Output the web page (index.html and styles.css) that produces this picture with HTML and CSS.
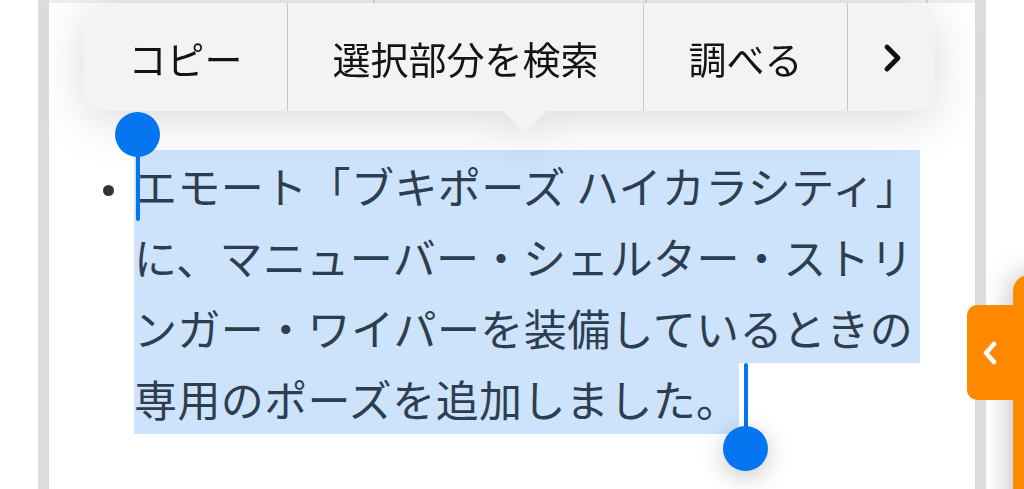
FILE: index.html
```html
<!DOCTYPE html>
<html lang="ja">
<head>
    <meta charset="UTF-8">
    <meta name="viewport" content="width=device-width, initial-scale=1.0">
    <title>アップデート内容</title>
    <link rel="stylesheet" href="styles.css">
</head>
<body>
    <div class="page">
        <div class="card">
            <div class="prev-row">
                <div class="prev-cell prev-first"><span>■ ギア</span></div>
                <div class="prev-cell prev-second"><span>ブキ</span></div>
                <div class="prev-cell"><span>ステージ</span></div>
            </div>

            <div class="notes">
                <div class="item">
                    <span class="dot"></span>
                    <div class="text">
                        <div class="line">エモート「ブキポーズ ハイカラシティ」</div>
                        <div class="line">に、マニューバー・シェルター・ストリ</div>
                        <div class="line">ンガー・ワイパーを装備しているときの</div>
                        <div class="line last">専用のポーズを追加しました。</div>
                    </div>
                </div>
            </div>
        </div>

        <!-- iOS edit menu over the selection -->
        <div class="edit-menu">
            <div class="menu-arrow"></div>
            <div class="menu-item copy">コピー</div>
            <div class="menu-item search">選択部分を検索</div>
            <div class="menu-item lookup">調べる</div>
            <div class="menu-item more">
                <svg width="22" height="30" viewBox="0 0 22 30">
                    <polyline points="6,4 17,15 6,26" fill="none" stroke="#111" stroke-width="4.8" stroke-linecap="round" stroke-linejoin="round"/>
                </svg>
            </div>
        </div>

        <!-- selection handles -->
        <div class="handle handle-start">
            <span class="knob"></span>
            <span class="stem"></span>
        </div>
        <div class="handle handle-end">
            <span class="stem"></span>
            <span class="knob"></span>
        </div>

        <!-- side drawer -->
        <div class="drawer"></div>
        <div class="drawer-tab">
            <svg width="16" height="24" viewBox="0 0 16 24">
                <polyline points="12,3 4,12 12,21" fill="none" stroke="#fff" stroke-width="4.5" stroke-linecap="round" stroke-linejoin="round"/>
            </svg>
        </div>
    </div>
</body>
</html>
```

FILE: styles.css
```css
body {
    margin: 0;
    padding: 0;
    background-color: #fff;
    font-family: "Noto Sans CJK JP", "Noto Sans", sans-serif;
}
.page {
    position: relative;
    width: 1024px;
    height: 489px;
    overflow: hidden;
    background-color: #fff;
}
.card {
    margin-left: 38px;
    width: 926px;
    height: 489px;
    border-left: 11px solid #dcdcdc;
    border-right: 11px solid #dcdcdc;
    background-color: #fff;
}

/* cut-off table row above */
.prev-row {
    display: flex;
    height: 3px;
    overflow: hidden;
    background-color: #efefef;
}
.prev-cell {
    height: 3px;
    overflow: hidden;
    border-right: 2px solid #d4d4d4;
    padding-left: 160px;
    font-size: 30px;
    color: #222;
}
.prev-cell span {
    display: block;
    margin-top: -36px;
    line-height: 39px;
}
.prev-first {
    width: 164px;
}
.prev-second {
    width: 110px;
}

/* note list */
.notes {
    margin-top: 147px;
}
.item {
    display: flex;
    align-items: flex-start;
}
.dot {
    width: 11px;
    height: 11px;
    border-radius: 50%;
    background-color: #333;
    margin-left: 54px;
    margin-top: 35px;
    margin-right: 20px;
    flex-shrink: 0;
}
.text {
    width: 786px;
    font-size: 43px;
    line-height: 71px;
    letter-spacing: 0.4px;
    color: #2c3e50;
    text-spacing-trim: space-all;
}
.line {
    white-space: nowrap;
    background-color: #cde2fb;
}
.line.last {
    display: inline-block;
    vertical-align: top;
}

/* edit menu */
.edit-menu {
    position: absolute;
    left: 84px;
    top: 3px;
    width: 851px;
    height: 108px;
    display: flex;
    background-color: #f3f3f3;
    border-radius: 22px;
    filter: drop-shadow(0 8px 24px rgba(0, 0, 0, 0.15));
}
.menu-item {
    position: relative;
    display: flex;
    align-items: center;
    justify-content: center;
    height: 108px;
    font-size: 38px;
    color: #141414;
    border-right: 1px solid #c9c9c9;
}
.copy {
    width: 203px;
}
.search {
    width: 355px;
}
.lookup {
    width: 203px;
}
.more {
    width: 87px;
    border-right: none;
    padding-top: 2px;
    box-sizing: border-box;
}
.menu-arrow {
    position: absolute;
    left: 423px;
    top: 86px;
    width: 36px;
    height: 36px;
    background-color: #f3f3f3;
    border-radius: 4px;
    transform: rotate(45deg);
}

/* selection handles */
.handle {
    position: absolute;
    display: flex;
    flex-direction: column;
    align-items: center;
    width: 45px;
}
.knob {
    width: 45px;
    height: 45px;
    border-radius: 50%;
    background-color: #0576f0;
}
.stem {
    width: 4px;
    background-color: #0576f0;
    border-radius: 2px;
}
.handle-start {
    left: 115px;
    top: 112px;
}
.handle-start .stem {
    height: 74px;
    margin-top: -10px;
}
.handle-end {
    left: 723px;
    top: 363px;
}
.handle-end .stem {
    height: 70px;
    margin-bottom: -7px;
}
.handle-end .knob {
    box-shadow: 0 6px 24px rgba(0, 0, 0, 0.22);
}

/* orange side drawer */
.drawer {
    position: absolute;
    left: 1013px;
    top: 275px;
    width: 40px;
    height: 260px;
    background-color: #ff8a00;
    border-radius: 16px 0 0 0;
    box-shadow: 0 0 30px rgba(0, 0, 0, 0.3);
}
.drawer-tab {
    position: absolute;
    left: 967px;
    top: 305px;
    width: 70px;
    height: 95px;
    background-color: #ff8a00;
    border-radius: 10px;
    display: flex;
    align-items: center;
    padding-left: 15px;
    box-sizing: border-box;
}
```
